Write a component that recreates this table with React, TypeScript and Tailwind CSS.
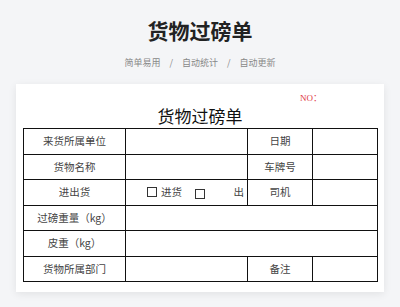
const cell = "border-[1.5px] border-[#111] text-center text-[10.5px] text-[#444] font-normal";

function Box() {
  return <span className="inline-block w-[10px] h-[10px] border border-[#333] align-middle" />;
}

export default function App() {
  return (
    <div
      className="w-[400px] h-[307px] bg-[#f4f5f7] overflow-hidden"
      style={{ fontFamily: '"Noto Sans CJK SC", "Noto Sans", sans-serif' }}
    >
      {/* 页头 */}
      <div className="pt-[15px] text-center">
        <h1 className="text-[21px] leading-[30px] font-bold text-[#222]">货物过磅单</h1>
        <div className="mt-[11px] flex justify-center items-center text-[9px] leading-[14px] text-[#888]">
          <span>简单易用</span>
          <span className="mx-[9px]">/</span>
          <span>自动统计</span>
          <span className="mx-[9px]">/</span>
          <span>自动更新</span>
        </div>
      </div>

      {/* 表单卡片 */}
      <div className="mx-[16px] mt-[14px] bg-white shadow-[0_2px_8px_rgba(0,0,0,0.08)] px-[7px] pb-[10px]">
        <div className="flex justify-end pr-[55px] pt-[9px] h-[20px]">
          <span
            className="text-[9px] leading-[10px] text-[#e0393e]"
            style={{ fontFamily: '"Liberation Serif", "Noto Sans CJK SC", serif' }}
          >
            NO：
          </span>
        </div>
        <div className="text-center text-[17px] leading-[24px] text-[#111]">货物过磅单</div>
        <table className="table-fixed border-collapse w-[354px]">
          <colgroup>
            <col className="w-[102px]" />
            <col className="w-[122px]" />
            <col className="w-[65px]" />
            <col className="w-[65px]" />
          </colgroup>
          <tbody>
            <tr className="h-[25.5px]">
              <td className={cell}>来货所属单位</td>
              <td className={cell}></td>
              <td className={cell}>日期</td>
              <td className={cell}></td>
            </tr>
            <tr className="h-[25.5px]">
              <td className={cell}>货物名称</td>
              <td className={cell}></td>
              <td className={cell}>车牌号</td>
              <td className={cell}></td>
            </tr>
            <tr className="h-[25.5px]">
              <td className={cell}>进出货</td>
              <td className={cell}>
                <div className="flex items-center pl-[21px] pr-[3px]">
                  <Box />
                  <span className="ml-[4px]">进货</span>
                  <span className="ml-[13px]"><Box /></span>
                  <span className="ml-auto">出</span>
                </div>
              </td>
              <td className={cell}>司机</td>
              <td className={cell}></td>
            </tr>
            <tr className="h-[25.5px]">
              <td className={cell}>过磅重量（kg）</td>
              <td className={cell} colSpan={3}></td>
            </tr>
            <tr className="h-[25.5px]">
              <td className={cell}>皮重（kg）</td>
              <td className={cell} colSpan={3}></td>
            </tr>
            <tr className="h-[25.5px]">
              <td className={cell}>货物所属部门</td>
              <td className={cell}></td>
              <td className={cell}>备注</td>
              <td className={cell}></td>
            </tr>
          </tbody>
        </table>
      </div>
    </div>
  );
}
